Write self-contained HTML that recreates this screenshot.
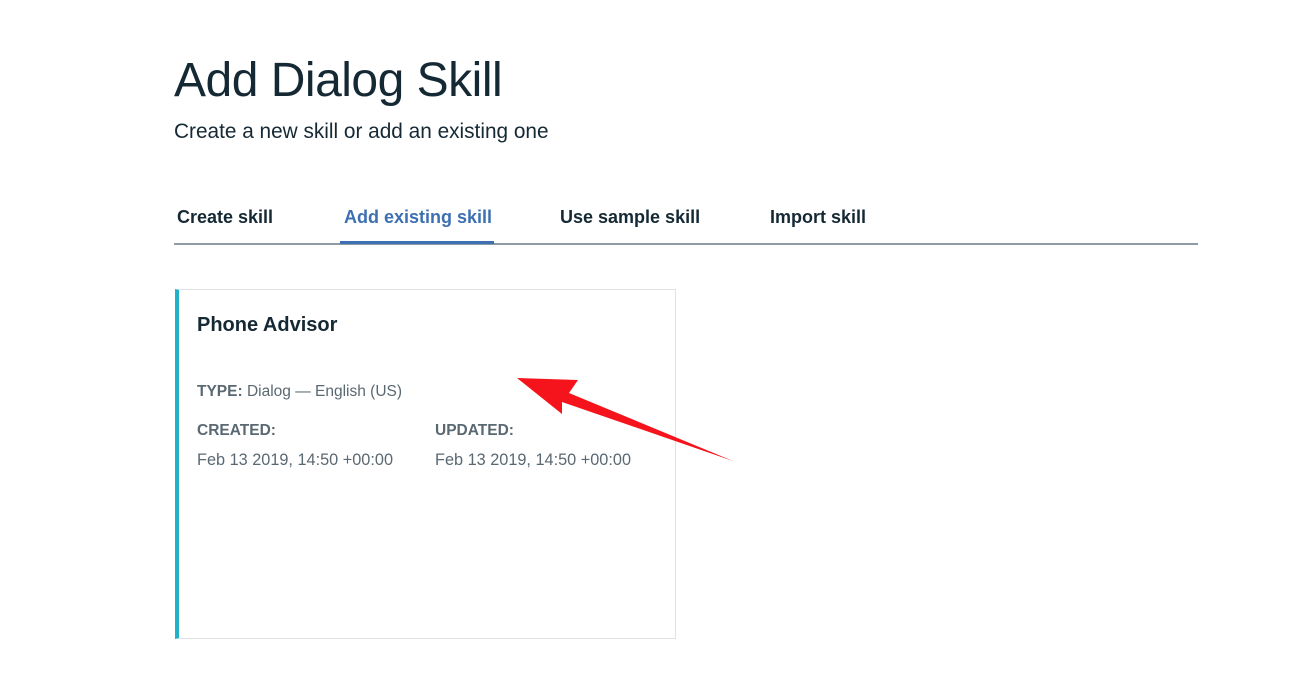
<!DOCTYPE html>
<html><head><style>
body{margin:0;width:1290px;height:696px;background:#fff;font-family:"Liberation Sans",sans-serif;position:relative;overflow:hidden;color:#152935}
.a{position:absolute;white-space:nowrap}
</style></head><body>
<div class="a" style="left:174px;top:53px;font-size:48px;font-weight:300;color:#152935;letter-spacing:-0.5px">Add Dialog Skill</div>
<div class="a" style="left:174px;top:120px;font-size:20.8px;color:#152935">Create a new skill or add an existing one</div>
<div class="a" style="left:177px;top:207px;font-size:18px;font-weight:bold">Create skill</div>
<div class="a" style="left:344px;top:207px;font-size:18px;font-weight:bold;color:#3d70b2">Add existing skill</div>
<div class="a" style="left:560px;top:207px;font-size:18px;font-weight:bold">Use sample skill</div>
<div class="a" style="left:770px;top:207px;font-size:18px;font-weight:bold">Import skill</div>
<div class="a" style="left:174px;top:243px;width:1024px;height:2px;background:#8c9ba5"></div>
<div class="a" style="left:340px;top:241px;width:154px;height:3px;background:#3d70b2"></div>
<div class="a" style="left:175px;top:289px;width:496px;height:348px;border:1px solid #dfe3e6;border-left:4px solid #1fb2c8"></div>
<div class="a" style="left:197px;top:314px;font-size:20px;font-weight:bold;color:#152935">Phone Advisor</div>
<div class="a" style="left:197px;top:383px;font-size:15.5px;color:#5a6872"><b>TYPE:</b> Dialog — English (US)</div>
<div class="a" style="left:197px;top:422px;font-size:15.5px;font-weight:bold;color:#5a6872">CREATED:</div>
<div class="a" style="left:435px;top:422px;font-size:15.5px;font-weight:bold;color:#5a6872">UPDATED:</div>
<div class="a" style="left:197px;top:451px;font-size:16.3px;color:#5a6872">Feb 13 2019, 14:50 +00:00</div>
<div class="a" style="left:435px;top:451px;font-size:16.3px;color:#5a6872">Feb 13 2019, 14:50 +00:00</div>
<svg class="a" style="left:0;top:0" width="1290" height="696"><polygon points="517,378 578,380 569,393 733,461 562,402 562,414" fill="#f5141c"/></svg>
</body></html>
